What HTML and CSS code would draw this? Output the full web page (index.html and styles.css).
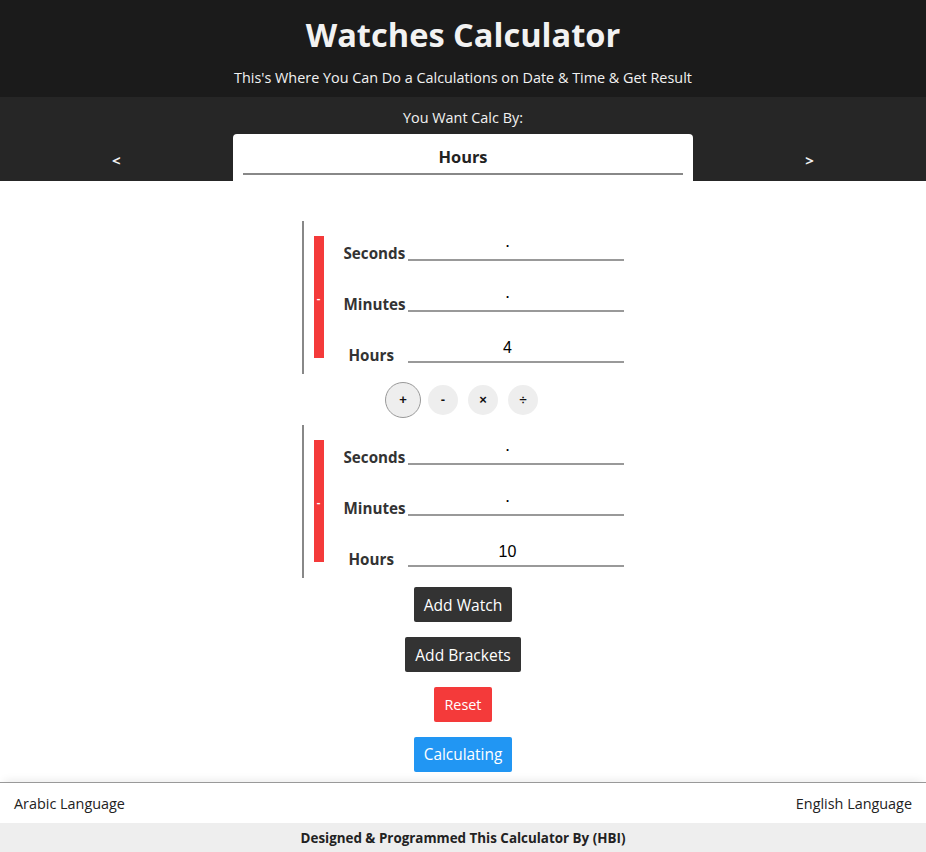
FILE: index.html
```html
<!DOCTYPE html>
<html>
<head>
<meta charset="utf-8">
<link rel="stylesheet" href="styles.css">
</head>
<body>
<header class="top">
  <h1 class="title">Watches Calculator</h1>
  <p class="subtitle">This's Where You Can Do a Calculations on Date &amp; Time &amp; Get Result</p>
</header>
<section class="mode">
  <div class="mode-label">You Want Calc By:</div>
  <div class="mode-row">
    <span class="arrow">&lt;</span>
    <div class="mode-box"><div class="mode-value">Hours</div></div>
    <span class="arrow">&gt;</span>
  </div>
</section>
<main class="main">
  <div class="watch">
    <div class="remove">-</div>
    <div class="fields">
      <div class="field"><span class="lbl">Seconds</span><span class="inp">٠</span></div>
      <div class="field"><span class="lbl">Minutes</span><span class="inp">٠</span></div>
      <div class="field"><span class="lbl lbl-h">Hours</span><span class="inp">4</span></div>
    </div>
  </div>
  <div class="ops">
    <span class="op op-active">+</span>
    <span class="op">-</span>
    <span class="op">×</span>
    <span class="op">÷</span>
  </div>
  <div class="watch">
    <div class="remove">-</div>
    <div class="fields">
      <div class="field"><span class="lbl">Seconds</span><span class="inp">٠</span></div>
      <div class="field"><span class="lbl">Minutes</span><span class="inp">٠</span></div>
      <div class="field"><span class="lbl lbl-h">Hours</span><span class="inp">10</span></div>
    </div>
  </div>
  <div class="actions">
    <button class="btn btn-dark">Add Watch</button>
    <button class="btn btn-dark">Add Brackets</button>
    <button class="btn btn-red">Reset</button>
    <button class="btn btn-blue">Calculating</button>
  </div>
</main>
<footer class="foot">
  <div class="langs"><span>Arabic Language</span><span>English Language</span></div>
  <div class="credit">Designed &amp; Programmed This Calculator By (HBI)</div>
</footer>
</body>
</html>
```
FILE: styles.css
```css
* { box-sizing: border-box; }
body {
  margin: 0;
  font-family: "Open Sans", "Noto Sans", sans-serif;
  color: #222;
  background: #fff;
}
.top {
  background: #1b1b1b;
  color: #f2f2f2;
  text-align: center;
  height: 97px;
  padding-top: 12px;
}
.title {
  margin: 0;
  font-size: 32.6px;
  line-height: 46px;
  font-weight: 700;
}
.subtitle {
  margin: 0;
  font-size: 14.4px;
  line-height: 40px;
}
.mode {
  background: #262626;
  color: #f2f2f2;
  height: 84px;
}
.mode-label {
  text-align: center;
  font-size: 14.4px;
  line-height: 20px;
  padding-top: 11px;
  height: 37px;
}
.mode-row {
  display: flex;
  align-items: center;
  justify-content: center;
}
.arrow {
  width: 233px;
  text-align: center;
  font-weight: 700;
  font-size: 15px;
  padding-top: 4px;
}
.mode-box {
  width: 461px;
  height: 47px;
  background: #fff;
  border-radius: 4px 4px 0 0;
  padding: 0 10px;
}
.mode-value {
  color: #222;
  font-weight: 700;
  font-size: 16.4px;
  text-align: center;
  line-height: 22px;
  padding-top: 12px;
  height: 41px;
  border-bottom: 2px solid #888;
}
.main {
  display: flex;
  flex-direction: column;
  align-items: center;
  padding-top: 40px;
}
.watch {
  display: flex;
  width: 322px;
  margin-left: -1px;
  border-left: 2px solid #888;
  padding: 15px 0 0 10px;
  height: 153px;
}
.remove {
  width: 10px;
  height: 122px;
  background: #f43a3a;
  color: #fff;
  font-size: 11px;
  font-weight: 700;
  display: flex;
  align-items: center;
  justify-content: center;
}
.fields {
  padding-left: 20px;
}
.field {
  display: flex;
  align-items: flex-end;
  height: 51px;
}
.field:first-child { height: 25px; }
.lbl {
  width: 64px;
  font-weight: 700;
  font-size: 15.2px;
  color: #333;
  line-height: 18px;
  margin-bottom: -1px;
}
.lbl-h { padding-left: 5px; }
.inp {
  width: 216px;
  border-bottom: 2px solid #999;
  text-align: center;
  font-family: "Liberation Sans", "DejaVu Sans", Arial, sans-serif;
  font-size: 16px;
  line-height: 22px;
  padding-bottom: 2px;
  padding-right: 16px;
  color: #000;
}
.ops {
  display: flex;
  align-items: center;
  gap: 10px;
  height: 51px;
}
.op {
  width: 30px;
  height: 30px;
  border-radius: 50%;
  background: #eee;
  display: flex;
  align-items: center;
  justify-content: center;
  font-family: "Liberation Sans", Arial, sans-serif;
  font-weight: 700;
  font-size: 13px;
  color: #111;
}
.op-active {
  width: 36px;
  height: 36px;
  border: 1px solid #999;
  margin-right: -3px;
  margin-left: -3px;
}
.actions {
  display: flex;
  flex-direction: column;
  align-items: center;
  gap: 15px;
  padding-top: 9px;
}
.btn {
  border: none;
  border-radius: 2px;
  color: #fff;
  font-family: "Open Sans", "Noto Sans", sans-serif;
  font-size: 15.6px;
  height: 35px;
  padding: 0 10px;
}
.btn-dark { background: #333; }
.btn-red { background: #f43a3a; font-size: 14.4px; }
.btn-blue { background: #2196f3; font-size: 15.4px; }
.foot {
  margin-top: 10px;
  border-top: 1px solid #999;
  box-shadow: 0 -6px 8px -4px rgba(0,0,0,0.08);
}
.langs {
  display: flex;
  justify-content: space-between;
  padding: 0 14px;
  height: 40px;
  align-items: center;
  font-size: 14.4px;
  color: #222;
}
.credit {
  background: #eee;
  text-align: center;
  font-weight: 700;
  font-size: 13.4px;
  height: 29px;
  line-height: 30px;
  color: #222;
}
```
